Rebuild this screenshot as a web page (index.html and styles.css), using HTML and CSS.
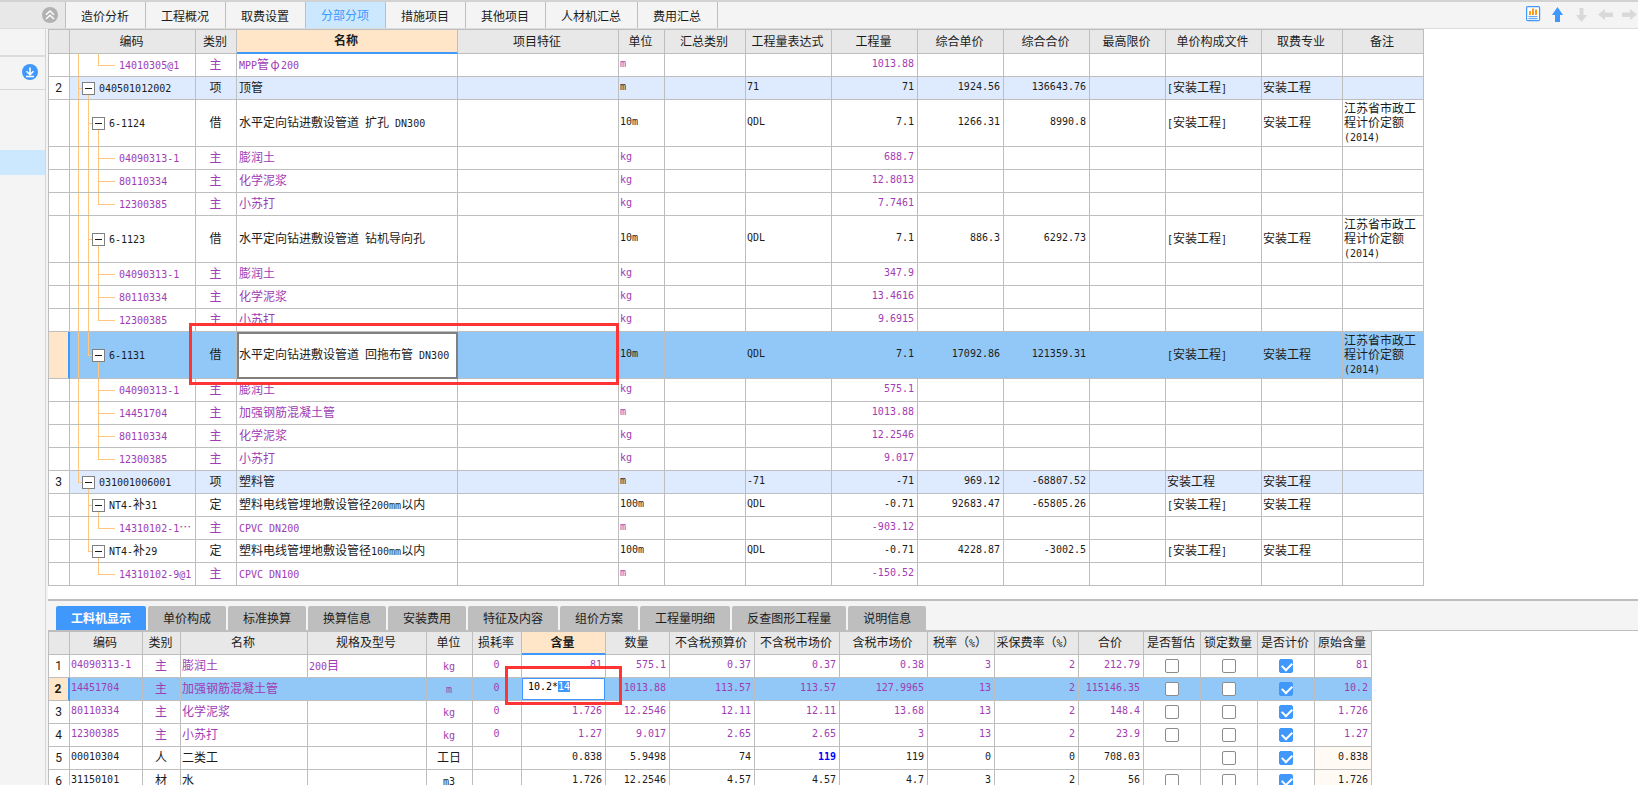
FILE: index.html
```html
<!DOCTYPE html>
<html lang="zh-CN">
<head>
<meta charset="utf-8">
<title>分部分项</title>
<link rel="stylesheet" href="styles.css">
</head>
<body>
<header class="topbar">
  <div class="corner">
    <button class="round gray" aria-label="收起"><svg width="16" height="16" viewBox="0 0 16 16" fill="none" stroke="#fff" stroke-width="1.5"><path d="M4 7.8 8 4l4 3.8M4 12 8 8.200l4 3.800"/></svg></button>
  </div>
  <nav class="tabs">
    <button>造价分析</button><button>工程概况</button><button>取费设置</button><button class="active">分部分项</button><button>措施项目</button><button>其他项目</button><button>人材机汇总</button><button>费用汇总</button>
  </nav>
  <div class="tools">
    <button aria-label="报表"><svg width="15" height="16" viewBox="0 0 15 16"><rect x=".6" y=".6" width="13" height="14" rx="1.200" fill="#fff" stroke="#4098fc" stroke-width="1.200"/><path d="M3 9V5h2v4zM6 9V2.500h2V9zM9 9V3.500h2V9z" fill="#ff9a1f"/><path d="M2.500 10.700h9M2.500 12.700h9" stroke="#4098fc"/></svg></button>
    <button aria-label="上移"><svg width="15" height="16" viewBox="0 0 15 16" fill="#4098fc"><path d="M7.500 1 13 9h-3v7H5V9H2z"/></svg></button>
    <button aria-label="下移"><svg width="15" height="16" viewBox="0 0 15 16" fill="#d9d9d9"><path d="M5.500 2h4v7H13l-5.500 7L2 9h3.500z"/></svg></button>
    <button aria-label="左移"><svg width="15" height="16" viewBox="0 0 15 16" fill="#d9d9d9"><path d="M0 8.500 7 3v3.500h8v4.500H7v3z"/></svg></button>
    <button aria-label="右移"><svg width="15" height="16" viewBox="0 0 15 16" fill="#d9d9d9"><path d="M15 8.500 8 3v3.500H0v4.500h8v3z"/></svg></button>
  </div>
</header>
<div class="main">
<aside class="side">
  <div class="side-head"></div>
  <div class="side-tool">
    <button class="round blue" aria-label="下载"><svg width="16" height="16" viewBox="0 0 16 16" fill="none" stroke="#fff" stroke-width="1.600"><path d="M8 3.500v7M4.500 7.200 8 10.700l3.500-3.500M4 12.500h8"/></svg></button>
  </div>
  <div class="side-list"><div class="side-selected"></div></div>
</aside>
<main class="content">
<section class="upper">
<table class="grid items">
<colgroup><col class="w21"><col class="w126"><col class="w41"><col class="w221"><col class="w161"><col class="w46"><col class="w81"><col class="w86"><col class="w86"><col class="w86"><col class="w86"><col class="w76"><col class="w96"><col class="w81"><col class="w81"></colgroup>
<thead><tr><th><th>编码<th>类别<th class="current">名称<th>项目特征<th>单位<th>汇总类别<th>工程量表达式<th>工程量<th>综合单价<th>综合合价<th>最高限价<th>单价构成文件<th>取费专业<th>备注</tr></thead>
<tbody>
<tr class="res"><td><td class="t3 v0 v2-top"><span class="l">14010305@1</span><td>主<td><span class="l">MPP</span>管<span class="full">φ</span><span class="l">200</span><td><td>m<td><td><td>1013.88<td><td><td><td><td><td></tr>
<tr class="sum"><td>2<td class="t1 v0 v1-bot"><div class="node"><button class="fold" aria-label="折叠"></button><span><span class="l">040501012002</span></span></div><td>项<td>顶管<td><td>m<td><td>71<td>71<td>1924.56<td>136643.76<td><td><span class="l">[</span>安装工程<span class="l">]</span><td>安装工程<td></tr>
<tr class="tall"><td><td class="t2 v0 v1 v2-bot"><div class="node"><button class="fold" aria-label="折叠"></button><span><span class="l">6-1124</span></span></div><td>借<td>水平定向钻进敷设管道<span class="l"> </span>扩孔<span class="l"> DN300</span><td><td>10m<td><td>QDL<td>7.1<td>1266.31<td>8990.8<td><td><span class="l">[</span>安装工程<span class="l">]</span><td>安装工程<td>江苏省市政工程计价定额<span class="l">(2014)</span></tr>
<tr class="res"><td><td class="t3 v0 v1 v2"><span class="l">04090313-1</span><td>主<td>膨润土<td><td>kg<td><td><td>688.7<td><td><td><td><td><td></tr>
<tr class="res"><td><td class="t3 v0 v1 v2"><span class="l">80110334</span><td>主<td>化学泥浆<td><td>kg<td><td><td>12.8013<td><td><td><td><td><td></tr>
<tr class="res"><td><td class="t3 v0 v1 v2-top"><span class="l">12300385</span><td>主<td>小苏打<td><td>kg<td><td><td>7.7461<td><td><td><td><td><td></tr>
<tr class="tall"><td><td class="t2 v0 v1 v2-bot"><div class="node"><button class="fold" aria-label="折叠"></button><span><span class="l">6-1123</span></span></div><td>借<td>水平定向钻进敷设管道<span class="l"> </span>钻机导向孔<td><td>10m<td><td>QDL<td>7.1<td>886.3<td>6292.73<td><td><span class="l">[</span>安装工程<span class="l">]</span><td>安装工程<td>江苏省市政工程计价定额<span class="l">(2014)</span></tr>
<tr class="res"><td><td class="t3 v0 v1 v2"><span class="l">04090313-1</span><td>主<td>膨润土<td><td>kg<td><td><td>347.9<td><td><td><td><td><td></tr>
<tr class="res"><td><td class="t3 v0 v1 v2"><span class="l">80110334</span><td>主<td>化学泥浆<td><td>kg<td><td><td>13.4616<td><td><td><td><td><td></tr>
<tr class="res"><td><td class="t3 v0 v1 v2-top"><span class="l">12300385</span><td>主<td>小苏打<td><td>kg<td><td><td>9.6915<td><td><td><td><td><td></tr>
<tr class="tall picked"><td><td class="t2 v0 v1-top v2-bot"><div class="node"><button class="fold" aria-label="折叠"></button><span><span class="l">6-1131</span></span></div><td class="marked">借<div class="mark mark-name"></div><td class="editing">水平定向钻进敷设管道<span class="l"> </span>回拖布管<span class="l"> DN300</span><td><td>10m<td><td>QDL<td>7.1<td>17092.86<td>121359.31<td><td><span class="l">[</span>安装工程<span class="l">]</span><td>安装工程<td>江苏省市政工程计价定额<span class="l">(2014)</span></tr>
<tr class="res"><td><td class="t3 v0 v2"><span class="l">04090313-1</span><td>主<td>膨润土<td><td>kg<td><td><td>575.1<td><td><td><td><td><td></tr>
<tr class="res"><td><td class="t3 v0 v2"><span class="l">14451704</span><td>主<td>加强钢筋混凝土管<td><td>m<td><td><td>1013.88<td><td><td><td><td><td></tr>
<tr class="res"><td><td class="t3 v0 v2"><span class="l">80110334</span><td>主<td>化学泥浆<td><td>kg<td><td><td>12.2546<td><td><td><td><td><td></tr>
<tr class="res"><td><td class="t3 v0 v2-top"><span class="l">12300385</span><td>主<td>小苏打<td><td>kg<td><td><td>9.017<td><td><td><td><td><td></tr>
<tr class="sum"><td>3<td class="t1 v0-top v1-bot"><div class="node"><button class="fold" aria-label="折叠"></button><span><span class="l">031001006001</span></span></div><td>项<td>塑料管<td><td>m<td><td>-71<td>-71<td>969.12<td>-68807.52<td><td>安装工程<td>安装工程<td></tr>
<tr><td><td class="t2 v1 v2-bot"><div class="node"><button class="fold" aria-label="折叠"></button><span><span class="l">NT4-</span>补<span class="l">31</span></span></div><td>定<td>塑料电线管埋地敷设管径<span class="l">200mm</span>以内<td><td>100m<td><td>QDL<td>-0.71<td>92683.47<td>-65805.26<td><td><span class="l">[</span>安装工程<span class="l">]</span><td>安装工程<td></tr>
<tr class="res"><td><td class="t3 v1 v2-top"><span class="l">14310102-1</span>⋯<td>主<td><span class="l">CPVC DN200</span><td><td>m<td><td><td>-903.12<td><td><td><td><td><td></tr>
<tr><td><td class="t2 v1-top v2-bot"><div class="node"><button class="fold" aria-label="折叠"></button><span><span class="l">NT4-</span>补<span class="l">29</span></span></div><td>定<td>塑料电线管埋地敷设管径<span class="l">100mm</span>以内<td><td>100m<td><td>QDL<td>-0.71<td>4228.87<td>-3002.5<td><td><span class="l">[</span>安装工程<span class="l">]</span><td>安装工程<td></tr>
<tr class="res"><td><td class="t3 v2-top"><span class="l">14310102-9@1</span><td>主<td><span class="l">CPVC DN100</span><td><td>m<td><td><td>-150.52<td><td><td><td><td><td></tr>
</tbody>
</table>
</section>
<section class="lower">
<nav class="subtabs">
  <button class="active">工料机显示</button><button>单价构成</button><button>标准换算</button><button>换算信息</button><button>安装费用</button><button>特征及内容</button><button>组价方案</button><button>工程量明细</button><button>反查图形工程量</button><button>说明信息</button>
</nav>
<table class="grid detail">
<colgroup><col class="w21"><col class="w73"><col class="w38"><col class="w127"><col class="w119"><col class="w46"><col class="w49"><col class="w84"><col class="w64"><col class="w85"><col class="w85"><col class="w88"><col class="w67"><col class="w84"><col class="w65"><col class="w57"><col class="w57"><col class="w57"><col class="w57"></colgroup>
<thead><tr><th><th>编码<th>类别<th>名称<th>规格及型号<th>单位<th>损耗率<th class="current">含量<th>数量<th>不含税预算价<th>不含税市场价<th>含税市场价<th>税率（<span class="l">%</span>）<th>采保费率（<span class="l">%</span>）<th>合价<th>是否暂估<th>锁定数量<th>是否计价<th>原始含量</tr></thead>
<tbody>
<tr class="res"><td>1<td>04090313-1<td>主<td>膨润土<td><span class="l">200</span>目<td><span class="l">kg</span><td>0<td>81<td>575.1<td>0.37<td>0.37<td>0.38<td>3<td>2<td>212.79<td><input type="checkbox" aria-label="是否暂估"><td><input type="checkbox" aria-label="锁定数量"><td><input type="checkbox" aria-label="是否计价" checked><td>81</tr>
<tr class="res picked"><td>2<td>14451704<td>主<td>加强钢筋混凝土管<td><td><span class="l">m</span><td>0<td class="marked"><input class="amount" id="amount" type="text" value="10.2*14" aria-label="含量"><div class="mark mark-amount"></div><td>1013.88<td>113.57<td>113.57<td>127.9965<td>13<td>2<td>115146.35<td><input type="checkbox" aria-label="是否暂估"><td><input type="checkbox" aria-label="锁定数量"><td><input type="checkbox" aria-label="是否计价" checked><td>10.2</tr>
<tr class="res"><td>3<td>80110334<td>主<td>化学泥浆<td><td><span class="l">kg</span><td>0<td>1.726<td>12.2546<td>12.11<td>12.11<td>13.68<td>13<td>2<td>148.4<td><input type="checkbox" aria-label="是否暂估"><td><input type="checkbox" aria-label="锁定数量"><td><input type="checkbox" aria-label="是否计价" checked><td>1.726</tr>
<tr class="res"><td>4<td>12300385<td>主<td>小苏打<td><td><span class="l">kg</span><td>0<td>1.27<td>9.017<td>2.65<td>2.65<td>3<td>13<td>2<td>23.9<td><input type="checkbox" aria-label="是否暂估"><td><input type="checkbox" aria-label="锁定数量"><td><input type="checkbox" aria-label="是否计价" checked><td>1.27</tr>
<tr><td>5<td>00010304<td>人<td>二类工<td><td>工日<td><td>0.838<td>5.9498<td>74<td class="changed">119<td>119<td>0<td>0<td>708.03<td><td><input type="checkbox" aria-label="锁定数量"><td><input type="checkbox" aria-label="是否计价" checked><td class="tint">0.838</tr>
<tr><td>6<td>31150101<td>材<td>水<td><td><span class="l">m3</span><td><td>1.726<td>12.2546<td>4.57<td>4.57<td>4.7<td>3<td>2<td>56<td><input type="checkbox" aria-label="是否暂估"><td><input type="checkbox" aria-label="锁定数量"><td><input type="checkbox" aria-label="是否计价" checked><td class="tint">1.726</tr>
</tbody>
</table>
</section>
</main>
</div>
<script src="script.js"></script>
</body>
</html>
```
FILE: styles.css
```css
* { box-sizing: border-box; }
body {
  margin: 0;
  height: 100vh;
  display: flex;
  flex-direction: column;
  overflow: hidden;
  background: #fff;
  color: #1c1c1c;
  font: 12px/14px "Noto Sans CJK SC", sans-serif;
}
button {
  font: inherit;
  color: inherit;
  border: 0;
  padding: 0;
  background: none;
}
svg { display: block; }

/* top bar */
.topbar {
  display: flex;
  flex: none;
  height: 29px;
  border-top: 2px solid #d2d2d2;
  border-bottom: 1px solid #dcdcdc;
  background: #f4f4f4;
}
.corner {
  width: 66px;
  padding: 5px 7px 0 0;
  display: flex;
  justify-content: flex-end;
  align-items: flex-start;
  background: #e8e8e8;
  border-right: 1px solid #bebebe;
}
.round {
  width: 16px;
  height: 16px;
  border-radius: 50%;
}
.gray { background: #b2b2b2; }
.blue { background: #4098fc; }
.tabs { display: flex; }
.tabs button {
  padding: 1px 16px 0 15px;
  border-right: 1px solid #bebebe;
}
.tabs .active {
  padding-bottom: 1px;
  background: #cce8ff;
  color: #4098fc;
}
.tools {
  display: flex;
  gap: 9px;
  margin-left: auto;
  padding: 4px 1px 0 0;
  align-items: flex-start;
}

/* side strip */
.main {
  flex: 1;
  display: flex;
  min-height: 0;
}
.side {
  flex: none;
  width: 48px;
  background: #f4f4f4;
  border-right: 2px solid #f4f4f4;
}
.side > div { border-right: 1px solid #d6d6d6; }
.side-head {
  height: 28px;
  border-bottom: 2px solid #dcdcdc;
}
.side-tool {
  height: 33px;
  padding: 7px 7px 0 0;
  display: flex;
  justify-content: flex-end;
  align-items: flex-start;
  border-bottom: 1px solid #d6d6d6;
}
.side-list {
  height: 100%;
  padding-top: 60px;
}
.side-selected {
  height: 25px;
  background: #cce8ff;
}

/* grids */
.content {
  flex: 1;
  min-width: 0;
  display: flex;
  flex-direction: column;
}
.upper {
  flex: none;
  padding-bottom: 13px;
}
.grid {
  table-layout: fixed;
  width: 0;
  border-collapse: separate;
  border-spacing: 0;
  border: 1px solid #bebebe;
  border-width: 1px 0 0 1px;
}
.w21 { width: 21px; } .w38 { width: 38px; } .w41 { width: 41px; }
.w46 { width: 46px; } .w49 { width: 49px; } .w57 { width: 57px; }
.w64 { width: 64px; } .w65 { width: 65px; } .w67 { width: 67px; }
.w73 { width: 73px; } .w76 { width: 76px; } .w81 { width: 81px; }
.w84 { width: 84px; } .w85 { width: 85px; } .w86 { width: 86px; }
.w88 { width: 88px; } .w96 { width: 96px; } .w119 { width: 119px; }
.w126 { width: 126px; } .w127 { width: 127px; } .w161 { width: 161px; }
.w221 { width: 221px; }
.grid th, .grid td {
  height: 23px;
  padding: 0 2px 2px 1px;
  border: 1px solid #bebebe;
  border-width: 0 1px 1px 0;
  white-space: nowrap;
  text-align: left;
}
.grid th {
  padding: 0 2px 2px 0;
  background: #e8e8e8;
  font-weight: 400;
  text-align: center;
}
.items th { height: 24px; }
.grid .current {
  background: #ffe6c8;
  border-bottom: 2px solid #4098fc;
  font-weight: 700;
}
.l {
  font: 10px/0 "DejaVu Sans Mono", monospace;
  white-space: pre;
}
.full {
  display: inline-block;
  width: 12px;
  text-align: center;
}
.res { color: #a03cb4; }
.sum { background: #deeafe; }
.picked { background: #91c8f7; }
.items .tall td { height: 47px; }
.grid td:nth-child(1) {
  padding: 0 1px 0 0;
  background: #fff;
  color: #1c1c1c;
  font: 12px/14px Roboto, sans-serif;
  text-align: center;
}
.grid .picked td:nth-child(1) {
  background: #ffe6c8;
  border-right: 2px solid #4098fc;
  font-weight: 700;
}
.grid td:nth-child(3) { text-align: center; }
.items td:nth-child(4) { padding-left: 2px; }

.items td:nth-child(6), .items td:nth-child(8), .items td:nth-child(9),
.items td:nth-child(10), .items td:nth-child(11),
.detail td:nth-child(2), .detail td:nth-child(n+7) {
  font: 10px/14px "DejaVu Sans Mono", monospace;
}
.items td:nth-child(9), .items td:nth-child(10), .items td:nth-child(11),
.detail td:nth-child(n+8) {
  padding-right: 3px;
  text-align: right;
}
.items td:nth-child(15) { white-space: normal; }
.detail td:nth-child(6), .detail td:nth-child(7) { text-align: center; }
.detail td:nth-child(16), .detail td:nth-child(17), .detail td:nth-child(18) {
  padding: 0;
  text-align: center;
}

/* tree column: three guide lines and one branch line */
.items td:nth-child(2) {
  --line: linear-gradient(#ffc77d, #ffc77d);
  --h0: 0; --h1: 0; --h2: 0;
  --p0: 0; --p1: 0; --p2: 0;
  --hx: 0; --hw: 0;
  background-image: var(--line), var(--line), var(--line), var(--line);
  background-repeat: no-repeat;
  background-position: 8px var(--p0), 18px var(--p1), 28px var(--p2), var(--hx) 50%;
  background-size: 1px var(--h0), 1px var(--h1), 1px var(--h2), var(--hw) 1px;
}
.items td.v0 { --h0: 100%; }
.items td.v1 { --h1: 100%; }
.items td.v2 { --h2: 100%; }
.items td.v0-top { --h0: 50%; }
.items td.v1-top { --h1: 50%; }
.items td.v2-top { --h2: 50%; }
.items td.v1-bot { --h1: 50%; --p1: 100%; }
.items td.v2-bot { --h2: 50%; --p2: 100%; }
.items td.t1 { padding: 0 0 0 12px; --hx: 8px; --hw: 10px; }
.items td.t2 { padding: 0 0 0 22px; --hx: 18px; --hw: 10px; }
.items td.t3 { padding-left: 49px; --hx: 28px; --hw: 17px; }
.node {
  display: flex;
  align-items: center;
}
.node > span { padding-bottom: 2px; }
.fold {
  width: 13px;
  height: 13px;
  margin-right: 4px;
  border: 1px solid #808080;
  background: linear-gradient(#1c1c1c, #1c1c1c) center / 7px 1px no-repeat #fff;
}

.grid .editing {
  background: #fff;
  outline: 2px solid #808080;
  outline-offset: -2px;
}
.marked { position: relative; }
.mark {
  position: absolute;
  z-index: 1;
  border: 3px solid #ff3434;
  pointer-events: none;
}
.mark-name { left: -7px; top: -9px; width: 430px; height: 62px; }
.mark-amount { left: -17px; top: -12px; width: 117px; height: 39px; }

/* lower panel */
.lower {
  flex: 1;
  min-height: 0;
  overflow: hidden;
}
.subtabs {
  display: flex;
  gap: 2px;
  padding: 5px 8px 0;
  background: #f4f4f4;
  border-top: 2px solid #bebebe;
  border-bottom: 1px solid #bebebe;
}
.subtabs button {
  height: 24px;
  padding: 0 15px;
  border-radius: 2px 2px 0 0;
  background: #bebebe;
}
.subtabs .active {
  background: #4098fc;
  color: #fff;
  font-weight: 700;
}
.detail td.changed { color: #00f; font-weight: 700; }
.detail .tint { background: #fffaf4; }
.detail td.marked { padding: 0; }
.amount {
  display: block;
  width: 100%;
  height: 22px;
  padding: 0 5px 6px;
  border: 1px solid #4098fc;
  border-radius: 0;
  outline: 0;
  background: #fff;
  color: #000;
  font: 10px/14px "DejaVu Sans Mono", monospace;
}
.amount::selection { background: #4098fc; color: #fff; }
input[type="checkbox"] {
  appearance: none;
  display: block;
  width: 14px;
  height: 14px;
  margin: 0 auto;
  border: 1px solid #8c8c8c;
  border-radius: 2px;
  background: #fff;
}
input[type="checkbox"]:checked {
  border-color: #4098fc;
  background: #4098fc;
}
input[type="checkbox"]:checked::after {
  content: "";
  display: block;
  width: 8px;
  height: 5px;
  margin: 2px 0 0 2px;
  border: solid #fff;
  border-width: 0 0 2px 2px;
  transform: rotate(-45deg);
}
```
FILE: script.js
```js
const amount = document.getElementById("amount");
amount.focus({ preventScroll: true });
amount.setSelectionRange(5, 7);
```
